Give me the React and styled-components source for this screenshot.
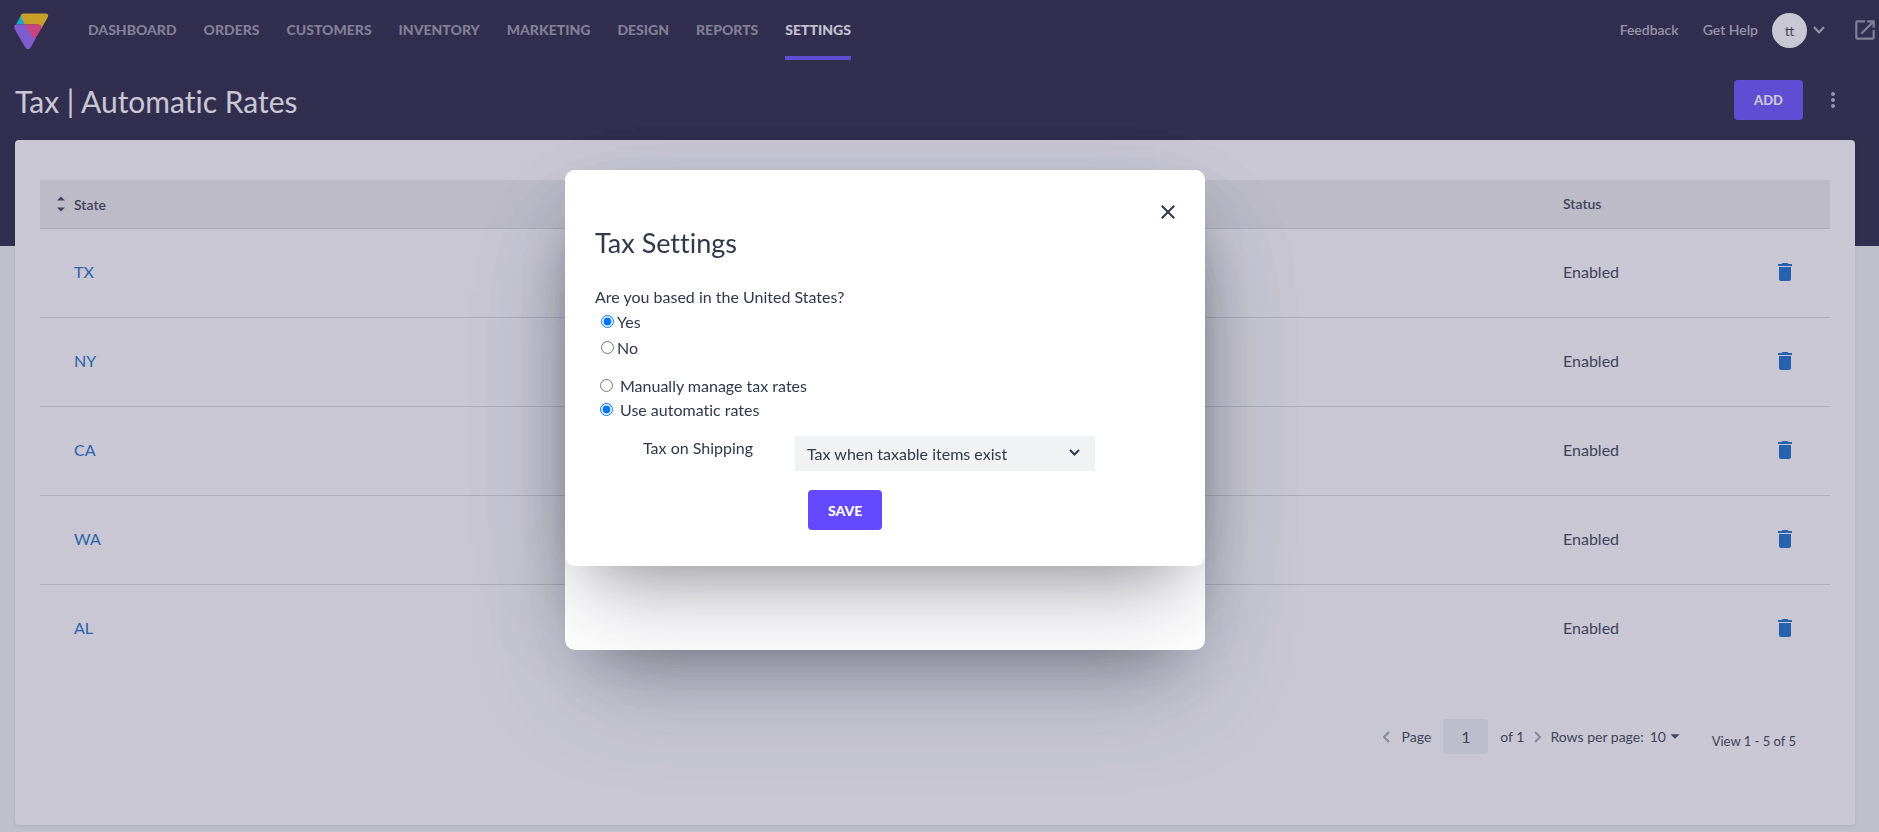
import React, { useState } from 'react'
import styled, { createGlobalStyle } from 'styled-components'
import {
  MdArrowDropDown,
  MdClose,
  MdDelete,
  MdMoreVert,
  MdOpenInNew
} from 'react-icons/md'

const GlobalStyle = createGlobalStyle`
  * {
    box-sizing: border-box;
  }

  body {
    margin: 0;
    background-color: #f3f3f5;
    color: #30384b;
    font-family: Lato, 'Open Sans', sans-serif;
    font-size: 16px;
    font-variant-ligatures: none;
    line-height: 24px;
  }

  button, input, select {
    font-family: inherit;
    color: inherit;
  }
`

const Page = styled.div`
  min-height: 100vh;
  padding-bottom: 7px;
  background: linear-gradient(#1e1a3a, #1e1a3a) top / 100% 246px no-repeat;
`

const TopBar = styled.header`
  display: flex;
  align-items: center;
  height: 60px;
  padding: 0 1px 0 14px;
`

const LogoLink = styled.a`
  display: flex;
  width: 35px;
  margin: 2px 39px 0 0;
`

const Nav = styled.nav`
  display: flex;
  gap: 27px;
  flex: 1;
`

const NavLink = styled.a`
  display: flex;
  align-items: center;
  height: 60px;
  padding-top: 3px;
  border-bottom: 4px solid ${(props) => (props.$active ? '#6449ff' : 'transparent')};
  color: ${(props) => (props.$active ? '#f8f8fa' : '#9695a4')};
  font-size: 14px;
  font-weight: 900;
  text-decoration: none;
  text-transform: uppercase;
`

const UserArea = styled.div`
  display: flex;
  align-items: center;
`

const HelpLink = styled.a`
  margin-right: 24px;
  color: #b4b3bf;
  font-size: 14px;
  font-weight: 600;
  text-decoration: none;
`

const UserButton = styled.button`
  display: flex;
  align-items: center;
  gap: 6px;
  margin: 0 27px 0 -10px;
  padding: 0;
  border: none;
  background: none;
  color: #b4b3bf;
  cursor: pointer;
`

const Avatar = styled.span`
  width: 35px;
  height: 35px;
  border-radius: 50%;
  background-color: #fff;
  color: #30384b;
  font-size: 14px;
  line-height: 35px;
  text-align: center;
`

const StoreLink = styled.a`
  display: flex;
  color: #9695a4;
`

const TitleBar = styled.div`
  display: flex;
  align-items: center;
  height: 80px;
  padding: 0 34px 0 15px;
`

const PageTitle = styled.h1`
  flex: 1;
  margin: 0;
  padding-top: 2px;
  color: #fff;
  font-size: 30px;
  font-weight: 400;
  line-height: 40px;
`

const PrimaryButton = styled.button`
  height: 40px;
  padding: 0 20px;
  border: none;
  border-radius: 4px;
  background-color: #6449ff;
  color: #fff;
  font-size: ${(props) => (props.$large ? '14px' : '13px')};
  font-weight: 900;
  cursor: pointer;
`

const IconButton = styled.button`
  display: flex;
  padding: 0;
  border: none;
  background: none;
  color: ${(props) => props.$color || 'inherit'};
  cursor: pointer;
`

const MoreButton = styled(IconButton)`
  margin-left: 18px;
`

const Card = styled.main`
  margin: 0 24px 0 15px;
  padding: 40px 25px 71px;
  border-radius: 4px;
  background-color: #fff;
  box-shadow: 0 1px 4px rgba(0, 0, 0, 0.1);
`

const Table = styled.table`
  width: 100%;
  border-collapse: separate;
  border-spacing: 0;
  table-layout: fixed;
`

const HeadCell = styled.th`
  width: ${(props) => props.$width || 'auto'};
  height: 49px;
  padding: 0 0 0 10px;
  border-bottom: 1px solid #d9d9dc;
  background-color: #ededee;
  font-size: 14px;
  font-weight: 600;
  text-align: left;
`

const SortButton = styled.button`
  display: flex;
  align-items: center;
  gap: 9px;
  padding: 0 0 0 7px;
  border: none;
  background: none;
  font-size: inherit;
  font-weight: inherit;
  cursor: pointer;
`

const Cell = styled.td`
  height: 89px;
  padding: 0 0 2px ${(props) => (props.$first ? '34px' : '10px')};
  border-bottom: 1px solid #d9d9dc;

  tr:last-child & {
    border-bottom-color: transparent;
  }
`

const StateLink = styled.a`
  color: #1067c6;
  text-decoration: none;
`

const Pagination = styled.div`
  display: flex;
  align-items: center;
  justify-content: flex-end;
  margin-top: 45px;
  padding-right: 34px;
  font-size: 14px;
`

const PageInput = styled.input`
  width: 45px;
  height: 35px;
  margin: 0 12px;
  border: none;
  border-radius: 4px;
  background-color: #eff2f5;
  font-size: 16px;
  text-align: center;
`

const PageArrow = styled(IconButton)`
  margin: ${(props) => (props.$next ? '0 8px 0 10px' : '0 12px 0 0')};
`

const RowsSelect = styled.label`
  display: flex;
  align-items: center;
  gap: 6px;

  select {
    appearance: none;
    width: 16px;
    padding: 0;
    border: none;
    background: none;
    font-size: 14px;
  }

  svg {
    margin: 0 0 2px -8px;
  }
`

const Summary = styled.span`
  margin: 8px 0 0 26px;
  font-size: 13px;
`

const Overlay = styled.div`
  position: fixed;
  inset: 0;
  display: flex;
  align-items: flex-start;
  justify-content: center;
  padding: 170px 109px 0 0;
  background-color: rgba(91, 88, 124, 0.335);
`

const modalShadow = '0 50px 100px -20px rgba(50, 50, 80, 0.25), 0 30px 60px -30px rgba(0, 0, 0, 0.35)'

const ModalFrame = styled.div`
  width: 640px;
  min-height: 480px;
  border-radius: 10px;
  background-color: #fff;
  box-shadow: ${modalShadow};
`

const Modal = styled.section`
  padding: 30px 25px 36px 30px;
  border-radius: 10px;
  background-color: #fff;
  box-shadow: ${modalShadow};
`

const ModalClose = styled(IconButton)`
  margin-left: auto;
`

const ModalTitle = styled.h2`
  margin: 1px 0 24px;
  font-size: 27px;
  font-weight: 400;
  line-height: 36px;
`

const Group = styled.fieldset`
  margin: 0 0 ${(props) => (props.$last ? '14px' : '13px')};
  padding: 0;
  border: none;
`

const Question = styled.legend`
  padding: 0;
`

const Option = styled.label`
  display: flex;
  align-items: center;
  gap: ${(props) => (props.$wide ? '7px' : '3px')};
  height: ${(props) => (props.$wide ? '24px' : '26px')};
  padding-left: ${(props) => (props.$wide ? '5px' : '6px')};

  input {
    margin: 0 0 2px;
  }
`

const Field = styled.div`
  display: flex;
  align-items: flex-start;
  margin-bottom: 19px;
  padding-left: 48px;
`

const FieldLabel = styled.label`
  width: 152px;
`

const SelectBox = styled.div`
  display: grid;
  width: 300px;
  align-items: center;

  > * {
    grid-area: 1 / 1;
  }

  svg {
    justify-self: end;
    margin: 0 15px 2px 0;
    pointer-events: none;
  }
`

const Select = styled.select`
  appearance: none;
  width: 100%;
  height: 35px;
  padding: 0 12px;
  border: none;
  border-radius: 0;
  background-color: #f1f2f4;
  font-size: 16px;
`

const Actions = styled.div`
  padding-left: 213px;
`

const navItems = ['Dashboard', 'Orders', 'Customers', 'Inventory', 'Marketing', 'Design', 'Reports', 'Settings']
const states = ['TX', 'NY', 'CA', 'WA', 'AL']

const Logo = () => (
  <svg width="35" height="37" viewBox="0 0 35 37" aria-hidden="true">
    <path fill="#00ccef" d="M7 2 L12 11.500 H2 Z" />
    <path fill="#fcc500" d="M9.500 0.500 H31.500 Q35.500 0.500 33.600 4.500 L27 16 L24 11.500 H11 L7.200 4.500 Q6 0.500 9.500 0.500 Z" />
    <path fill="#8f5ff7" d="M2.500 11.500 H11 L22 25 L17 34 Q14 38.500 11 34 L0.600 16 Q-0.800 11.500 2.500 11.500 Z" />
    <path fill="#ff3d86" d="M10.500 11.500 H25 Q28.500 12 27.300 15.500 L22.500 23.500 Q20.200 26.500 17.800 23.500 Z" />
  </svg>
)

const Chevron = ({ width = 12, height = 8, stroke = 2, points = '1,1 6,6.500 11,1' }) => (
  <svg width={width} height={height} viewBox={`0 0 ${width} ${height}`} fill="none" stroke="currentColor" strokeWidth={stroke} aria-hidden="true">
    <polyline points={points} />
  </svg>
)

const SortIcon = () => (
  <svg width="8" height="16" viewBox="0 0 8 16" fill="currentColor" aria-hidden="true">
    <path d="M0 4.500 L4 0.500 L8 4.500 Z M0 11.500 L4 15.500 L8 11.500 Z" />
  </svg>
)

function App() {
  const [inUS, setInUS] = useState('yes')
  const [mode, setMode] = useState('auto')

  return (
    <>
      <GlobalStyle />
      <Page>
        <TopBar>
          <LogoLink href="#" aria-label="Home"><Logo /></LogoLink>
          <Nav>
            {navItems.map((item) => (
              <NavLink key={item} href="#" $active={item === 'Settings'}>{item}</NavLink>
            ))}
          </Nav>
          <UserArea>
            <HelpLink href="#">Feedback</HelpLink>
            <HelpLink href="#">Get Help</HelpLink>
            <UserButton>
              <Avatar>tt</Avatar>
              <Chevron />
            </UserButton>
            <StoreLink href="#" aria-label="View store"><MdOpenInNew size={26} /></StoreLink>
          </UserArea>
        </TopBar>

        <TitleBar>
          <PageTitle>Tax | Automatic Rates</PageTitle>
          <PrimaryButton>ADD</PrimaryButton>
          <MoreButton $color="#b4b3bf" aria-label="More"><MdMoreVert size={24} /></MoreButton>
        </TitleBar>

        <Card>
          <Table>
            <thead>
              <tr>
                <HeadCell><SortButton><SortIcon />State</SortButton></HeadCell>
                <HeadCell $width="210px">Status</HeadCell>
                <HeadCell $width="67px" aria-label="Actions" />
              </tr>
            </thead>
            <tbody>
              {states.map((state) => (
                <tr key={state}>
                  <Cell $first><StateLink href="#">{state}</StateLink></Cell>
                  <Cell>Enabled</Cell>
                  <Cell>
                    <IconButton $color="#1067c6" aria-label={`Delete ${state}`}><MdDelete size={24} /></IconButton>
                  </Cell>
                </tr>
              ))}
            </tbody>
          </Table>

          <Pagination>
            <PageArrow $color="#9fa0af" aria-label="Previous page">
              <Chevron width={8} height={12} points="7,1 2,6 7,11" />
            </PageArrow>
            <label htmlFor="page">Page</label>
            <PageInput id="page" defaultValue="1" />
            <span>of 1</span>
            <PageArrow $next $color="#9fa0af" aria-label="Next page">
              <Chevron width={8} height={12} points="1,1 6,6 1,11" />
            </PageArrow>
            <RowsSelect>
              Rows per page:
              <select defaultValue="10">
                <option>10</option>
                <option>25</option>
              </select>
              <MdArrowDropDown size={22} />
            </RowsSelect>
            <Summary>View 1 - 5 of 5</Summary>
          </Pagination>
        </Card>
      </Page>

      <Overlay>
        <ModalFrame>
          <Modal role="dialog" aria-labelledby="modal-title">
            <ModalClose aria-label="Close"><MdClose size={24} /></ModalClose>
            <ModalTitle id="modal-title">Tax Settings</ModalTitle>
            <Group>
              <Question>Are you based in the United States?</Question>
              <Option>
                <input type="radio" name="us" checked={inUS === 'yes'} onChange={() => setInUS('yes')} />
                Yes
              </Option>
              <Option>
                <input type="radio" name="us" checked={inUS === 'no'} onChange={() => setInUS('no')} />
                No
              </Option>
            </Group>
            <Group $last>
              <Option $wide>
                <input type="radio" name="mode" checked={mode === 'manual'} onChange={() => setMode('manual')} />
                Manually manage tax rates
              </Option>
              <Option $wide>
                <input type="radio" name="mode" checked={mode === 'auto'} onChange={() => setMode('auto')} />
                Use automatic rates
              </Option>
            </Group>
            <Field>
              <FieldLabel htmlFor="shipping">Tax on Shipping</FieldLabel>
              <SelectBox>
                <Select id="shipping">
                  <option>Tax when taxable items exist</option>
                  <option>Always tax shipping</option>
                  <option>Never tax shipping</option>
                </Select>
                <Chevron width={11} height={7} points="1,1 5.500,5.500 10,1" />
              </SelectBox>
            </Field>
            <Actions>
              <PrimaryButton $large>SAVE</PrimaryButton>
            </Actions>
          </Modal>
        </ModalFrame>
      </Overlay>
    </>
  )
}

export default App
